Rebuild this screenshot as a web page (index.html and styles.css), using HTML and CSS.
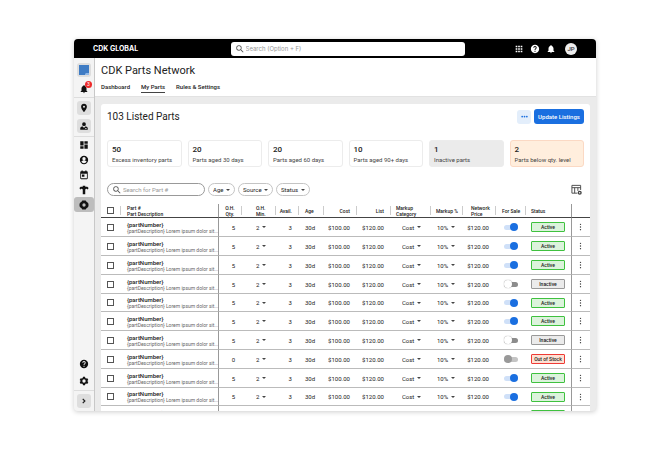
FILE: index.html
```html
<!DOCTYPE html>
<html lang="en">
<head>
    <meta charset="UTF-8">
    <meta name="viewport" content="width=device-width, initial-scale=1.0">
    <title>CDK Parts Network</title>
    <link rel="stylesheet" href="styles.css">
</head>
<body>
    <div class="app">
        <header class="topbar">
            <div class="brand">CDK GLOBAL</div>
            <label class="global-search">
                <svg class="icon" viewBox="0 0 24 24"><path d="M15.5 14h-.79l-.28-.27A6.47 6.47 0 0 0 16 9.5 6.5 6.5 0 1 0 9.5 16c1.61 0 3.09-.59 4.23-1.57l.27.28v.79l5 4.99L20.49 19l-4.99-5zm-6 0C7.01 14 5 11.99 5 9.5S7.01 5 9.5 5 14 7.01 14 9.5 11.99 14 9.5 14z"/></svg>
                <input type="text" placeholder="Search (Option + F)" aria-label="Search">
            </label>
            <div class="topbar-actions">
                <button aria-label="Apps"><svg class="icon" viewBox="0 0 24 24"><path d="M4 4h4v4H4zM10 4h4v4h-4zM16 4h4v4h-4zM4 10h4v4H4zM10 10h4v4h-4zM16 10h4v4h-4zM4 16h4v4H4zM10 16h4v4h-4zM16 16h4v4h-4z"/></svg></button>
                <button aria-label="Help"><svg class="icon" viewBox="0 0 24 24"><path d="M12 2C6.48 2 2 6.48 2 12s4.480 10 10 10 10-4.480 10-10S17.520 2 12 2zm1 17h-2v-2h2v2zm2.070-7.750l-.9.920C13.450 12.900 13 13.500 13 15h-2v-.5c0-1.100.45-2.100 1.170-2.830l1.240-1.260c.37-.36.59-.86.59-1.410 0-1.100-.9-2-2-2s-2 .9-2 2H8c0-2.210 1.790-4 4-4s4 1.790 4 4c0 .88-.36 1.680-.93 2.250z"/></svg></button>
                <button aria-label="Notifications"><svg class="icon" viewBox="0 0 24 24"><path d="M12 22c1.100 0 2-.9 2-2h-4c0 1.100.89 2 2 2zm6-6v-5c0-3.070-1.640-5.640-4.500-6.320V4a1.500 1.500 0 0 0-3 0v.68C7.630 5.360 6 7.920 6 11v5l-2 2v1h16v-1l-2-2z"/></svg></button>
                <button class="avatar">JP</button>
            </div>
        </header>

        <div class="body">
            <nav class="sidebar" aria-label="Main">
                <div class="side-group side-home">
                    <a href="#" class="tile" aria-label="Home"><svg class="logo" viewBox="0 0 10 10"><path fill="#3f7cc4" d="M0 0h10v10H0z"/><path fill="#8fb8e8" d="M6 9l1-1h3v2H6z"/></svg></a>
                    <a href="#" class="alerts" aria-label="Alerts"><svg class="icon" viewBox="0 0 24 24"><path d="M12 22c1.100 0 2-.9 2-2h-4c0 1.100.89 2 2 2zm6-6v-5c0-3.070-1.640-5.640-4.500-6.320V4a1.500 1.500 0 0 0-3 0v.68C7.630 5.360 6 7.920 6 11v5l-2 2v1h16v-1l-2-2z"/></svg><span class="count">3</span></a>
                </div>
                <div class="side-group side-place">
                    <a href="#" class="tile" aria-label="Location"><svg class="icon" viewBox="0 0 24 24"><path d="M12 2C8.130 2 5 5.130 5 9c0 5.250 7 13 7 13s7-7.750 7-13c0-3.870-3.130-7-7-7zm0 9.500a2.500 2.500 0 0 1 0-5 2.500 2.500 0 0 1 0 5z"/></svg></a>
                    <a href="#" class="tile" aria-label="Role"><svg class="icon" viewBox="0 0 24 24"><path d="M12 12a4.500 4.500 0 1 0 0-9 4.500 4.500 0 0 0 0 9zM3 21v-4c0-2.500 3-4 6-4l3 4 3-4c3 0 6 1.500 6 4v4zM15 17v2h3v-2z" fill-rule="evenodd"/></svg></a>
                </div>
                <div class="side-group side-links">
                    <a href="#" aria-label="Dashboard"><svg class="icon" viewBox="0 0 24 24"><path d="M3 13h8V3H3v10zm0 8h8v-6H3v6zm10 0h8V11h-8v10zm0-18v6h8V3h-8z"/></svg></a>
                    <a href="#" aria-label="Account"><svg class="icon" viewBox="0 0 24 24"><path fill-rule="evenodd" d="M12 2a10 10 0 1 0 0 20 10 10 0 0 0 0-20zm0 3a4 4 0 1 1 0 8 4 4 0 0 1 0-8zm0 14.500c-2.700 0-5-1.500-6.300-3.500 0-2 4.300-3 6.300-3s6.300 1 6.300 3a7.500 7.500 0 0 1-6.300 3.500z"/></svg></a>
                    <a href="#" aria-label="Calendar"><svg class="icon" viewBox="0 0 24 24"><path fill-rule="evenodd" d="M19 3h-1V1h-3v2H9V1H6v2H5a2 2 0 0 0-2 2v15a2 2 0 0 0 2 2h14a2 2 0 0 0 2-2V5a2 2 0 0 0-2-2zm0 17H5V9h14v11zM7 11h6v5H7z"/></svg></a>
                    <a href="#" aria-label="Service"><svg class="icon" viewBox="0 0 24 24"><path d="M9 2h6v2h5l3 3-2 4-3-2h-1l-2 2v11H9V11L7 9H6l-3 2-2-4 3-3h5z"/></svg></a>
                    <a href="#" class="current" aria-label="Parts"><svg class="icon" viewBox="0 0 24 24"><path fill-rule="evenodd" d="M8 1h8l2 3 4 3 1 5-1 5-4 3-2 3H8l-2-3-4-3-1-5 1-5 4-3zM12 8a4 4 0 1 0 0 8 4 4 0 0 0 0-8z"/></svg></a>
                </div>
                <div class="side-group side-tools">
                    <a href="#" aria-label="Help"><svg class="icon" viewBox="0 0 24 24"><path d="M12 2a10 10 0 1 0 0 20 10 10 0 0 0 0-20zm1 17h-2v-2h2v2zm2.070-7.750l-.9.920C13.450 12.900 13 13.500 13 15h-2v-.5c0-1.100.45-2.100 1.170-2.830l1.240-1.260c.37-.36.59-.86.59-1.410 0-1.100-.9-2-2-2s-2 .9-2 2H8c0-2.210 1.790-4 4-4s4 1.790 4 4c0 .88-.36 1.680-.93 2.250z"/></svg></a>
                    <a href="#" aria-label="Settings"><svg class="icon" viewBox="0 0 24 24"><path fill-rule="evenodd" d="M9.500 2h5l.6 3 1.900 1.100 2.900-1 2.500 4.300-2.300 2v1.200l2.300 2-2.500 4.300-2.900-1-1.900 1.100-.6 3h-5l-.6-3L7 17.900l-2.900 1-2.500-4.300 2.300-2v-1.200l-2.300-2 2.500-4.300 2.900 1L8.900 5zM12 8a4 4 0 1 0 0 8 4 4 0 0 0 0-8z"/></svg></a>
                </div>
                <div class="side-group side-expand">
                    <button class="tile" aria-label="Expand menu"><svg class="icon" viewBox="0 0 24 24"><path d="M9 7l5 5-5 5" fill="none" stroke="#222" stroke-width="3"/></svg></button>
                </div>
            </nav>

            <main class="main">
                <div class="page-head">
                    <h1>CDK Parts Network</h1>
                    <div class="tabs">
                        <a href="#">Dashboard</a>
                        <a href="#" class="active">My Parts</a>
                        <a href="#">Rules &amp; Settings</a>
                    </div>
                </div>

                <section class="card">
                    <div class="card-head">
                        <h2>103 Listed Parts</h2>
                        <button class="more" aria-label="More"><svg viewBox="0 0 24 24"><circle cx="4" cy="12" r="3"/><circle cx="12" cy="12" r="3"/><circle cx="20" cy="12" r="3"/></svg></button>
                        <button class="update">Update Listings</button>
                    </div>

                    <div class="stats">
                        <div class="stat"><strong>50</strong><span>Excess inventory parts</span></div>
                        <div class="stat"><strong>20</strong><span>Parts aged 30 days</span></div>
                        <div class="stat"><strong>20</strong><span>Parts aged 60 days</span></div>
                        <div class="stat"><strong>10</strong><span>Parts aged 90+ days</span></div>
                        <div class="stat muted"><strong>1</strong><span>Inactive parts</span></div>
                        <div class="stat warning"><strong>2</strong><span>Parts below qty. level</span></div>
                    </div>

                    <div class="filters">
                        <label class="part-search">
                            <svg class="icon" viewBox="0 0 24 24"><path d="M15.500 14h-.79l-.28-.27A6.470 6.470 0 0 0 16 9.500 6.500 6.500 0 1 0 9.500 16c1.610 0 3.090-.59 4.230-1.570l.27.28v.79l5 4.990L20.490 19l-4.990-5zm-6 0C7.010 14 5 11.990 5 9.500S7.010 5 9.500 5 14 7.010 14 9.500 11.990 14 9.500 14z"/></svg>
                            <input type="text" placeholder="Search for Part #" aria-label="Search for part number">
                        </label>
                        <select aria-label="Age"><option>Age</option></select>
                        <select aria-label="Source"><option>Source</option></select>
                        <select aria-label="Status"><option>Status</option></select>
                        <button class="columns" aria-label="Edit columns"><svg viewBox="0 0 24 24"><path d="M14 20H2V3h19v10M2 8h19M8 8v12M15 8v7" fill="none" stroke="#444" stroke-width="2"/><circle cx="19" cy="19" r="3" fill="none" stroke="#444" stroke-width="3"/></svg></button>
                    </div>

                    <table class="parts">
                        <colgroup>
                            <col class="c-check"><col class="c-part"><col class="c-qty"><col class="c-min"><col class="c-avail"><col class="c-age"><col class="c-cost"><col class="c-list"><col class="c-cat"><col class="c-markup"><col class="c-price"><col class="c-sale"><col class="c-status"><col class="c-menu">
                        </colgroup>
                        <thead>
                            <tr>
                                <th class="check"><input type="checkbox" aria-label="Select all"></th>
                                <th class="part sep">Part #<br>Part Description</th>
                                <th class="qty">O.H.<br>Qty.</th>
                                <th class="min sep">O.H.<br>Min.</th>
                                <th class="num sep">Avail.</th>
                                <th class="age sep">Age</th>
                                <th class="num sep">Cost</th>
                                <th class="num sep">List</th>
                                <th class="cat sep">Markup<br>Category</th>
                                <th class="markup sep">Markup %</th>
                                <th class="price sep">Network<br>Price</th>
                                <th class="sale sep">For Sale</th>
                                <th class="status sep">Status</th>
                                <th class="menu"></th>
                            </tr>
                        </thead>
                        <tbody id="parts-body"></tbody>
                    </table>
                </section>
            </main>
        </div>
    </div>

    <script>
        const parts = [
            { qty: 5, status: 'Active' },
            { qty: 5, status: 'Active' },
            { qty: 5, status: 'Active' },
            { qty: 5, status: 'Inactive' },
            { qty: 5, status: 'Active' },
            { qty: 5, status: 'Active' },
            { qty: 5, status: 'Inactive' },
            { qty: 0, status: 'Out of Stock' },
            { qty: 5, status: 'Active' },
            { qty: 5, status: 'Active' },
            { qty: 5, status: 'Active' }
        ];

        function displayParts(list) {
            document.getElementById('parts-body').innerHTML = list.map(part => `
                <tr>
                    <td class="check"><input type="checkbox" aria-label="Select part"></td>
                    <td class="part"><b>{partNumber}</b><span>{partDescription} Lorem ipsum dolor sit...</span></td>
                    <td class="qty">${part.qty}</td>
                    <td class="min"><select aria-label="On hand minimum"><option>2</option></select></td>
                    <td class="num">3</td>
                    <td class="age">30d</td>
                    <td class="num">$100.00</td>
                    <td class="num">$120.00</td>
                    <td class="cat"><select aria-label="Markup category"><option>Cost</option></select></td>
                    <td class="markup"><select aria-label="Markup percent"><option>10%</option></select></td>
                    <td class="price">$120.00</td>
                    <td class="sale"><input type="checkbox" class="switch" aria-label="For sale" ${part.status === 'Active' ? 'checked' : ''} ${part.qty === 0 ? 'disabled' : ''}></td>
                    <td class="status"><span class="badge ${part.status.toLowerCase().replace(/ /g, '-')}">${part.status}</span></td>
                    <td class="menu"><button aria-label="Row menu"><svg viewBox="0 0 8 24"><circle cx="4" cy="4" r="2"/><circle cx="4" cy="12" r="2"/><circle cx="4" cy="20" r="2"/></svg></button></td>
                </tr>`).join('');
        }

        displayParts(parts);
    </script>
</body>
</html>
```
FILE: styles.css
```css
* {
    box-sizing: border-box;
}
body {
    font-family: Roboto, "Liberation Sans", sans-serif;
    font-size: 6px;
    line-height: 8px;
    color: #222;
    background: #fff;
    margin: 0;
    padding: 39px 74px;
    height: 100vh;
}
button, input, select {
    font: inherit;
    color: inherit;
    margin: 0;
    padding: 0;
    border: none;
    background: none;
}
a {
    color: inherit;
    text-decoration: none;
}
.icon {
    display: block;
    width: 10px;
    height: 10px;
    fill: #111;
}
.app {
    height: 100%;
    display: flex;
    flex-direction: column;
    overflow: hidden;
    border-radius: 4px;
    background: #ebebeb;
    box-shadow: 0 1px 5px rgba(0, 0, 0, 0.2);
}

/* Top bar */
.topbar {
    display: grid;
    grid-template-columns: 3fr 5fr 2fr;
    align-items: center;
    height: 19px;
    flex: none;
    background: #000;
    color: #fff;
}
.brand {
    padding-left: 19px;
    font-family: Inter, sans-serif;
    font-size: 7px;
    font-weight: 700;
}
.global-search {
    display: flex;
    align-items: center;
    gap: 1px;
    height: 14px;
    width: 90%;
    padding-left: 4px;
    border-radius: 3px;
    background: #fff;
}
.global-search .icon, .part-search .icon {
    fill: #555;
}
.global-search input, .part-search input {
    flex: 1;
    min-width: 0;
    outline: none;
    color: #222;
}
.global-search input {
    font-family: Inter, sans-serif;
}
input::placeholder {
    color: #999;
}
.topbar-actions {
    display: flex;
    justify-content: flex-end;
    align-items: center;
    gap: 6px;
    padding-right: 19px;
}
.topbar-actions .icon {
    fill: #fff;
}
.topbar-actions .avatar {
    width: 12px;
    height: 12px;
    margin-left: 3px;
    border-radius: 50%;
    background: #eee;
    color: #333;
    font-weight: 500;
}

/* Sidebar */
.body {
    display: flex;
    flex: 1;
    min-height: 0;
}
.sidebar {
    display: flex;
    flex-direction: column;
    width: 21px;
    flex: none;
    background: #f4f4f4;
    border-right: 1px solid #c8c8c8;
}
.side-group {
    display: flex;
    flex-direction: column;
    align-items: center;
}
.side-group a {
    display: flex;
    align-items: center;
    justify-content: center;
    width: 100%;
    height: 15px;
}
.side-group .tile {
    display: flex;
    align-items: center;
    justify-content: center;
    width: 14px;
    height: 14px;
    border-radius: 3px;
    background: #dedede;
}
.side-home {
    gap: 4px;
    padding: 5px 0 1px;
    border-bottom: 1px solid #ddd;
}
.side-home .logo {
    width: 10px;
    height: 10px;
}
.side-home .alerts {
    position: relative;
}
.count {
    position: absolute;
    top: 0;
    right: 2px;
    width: 7px;
    height: 7px;
    border-radius: 50%;
    background: #ee2b2b;
    color: #fff;
    font-size: 5px;
    line-height: 7px;
    text-align: center;
}
.side-place {
    gap: 4px;
    padding: 3px 0;
    border-bottom: 1px solid #ddd;
}
.side-links .current {
    border-radius: 3px;
    background: #bdbdbd;
}
.side-tools {
    margin-top: auto;
    gap: 2px;
    padding-bottom: 2px;
}
.side-expand {
    padding: 3px 0;
    border-top: 1px solid #ddd;
}

/* Page */
.main {
    display: flex;
    flex-direction: column;
    flex: 1;
    min-width: 0;
}
.page-head {
    flex: none;
    height: 39px;
    padding: 5px 6px 0;
    background: #fff;
    border-bottom: 1px solid #e2e2e2;
}
h1, h2 {
    margin: 0;
    font-weight: 400;
}
h1 {
    font-size: 11px;
    line-height: 16px;
}
.tabs {
    display: flex;
    gap: 11px;
    margin-top: 3px;
    font-weight: 500;
}
.tabs a {
    height: 11px;
    line-height: 10px;
}
.tabs .active {
    border-bottom: 1px solid #444;
}
.card {
    flex: 1;
    min-height: 0;
    overflow: hidden;
    margin: 7px 6px 0;
    border-radius: 3px 3px 0 0;
    background: #fff;
}
.card-head {
    display: flex;
    align-items: center;
    gap: 3px;
    padding: 5px 6px 0;
}
h2 {
    flex: 1;
    font-size: 10px;
    line-height: 15px;
}
.more {
    display: flex;
    align-items: center;
    justify-content: center;
    width: 14px;
    height: 14px;
    border-radius: 3px;
    background: #e3eefb;
}
.more svg {
    width: 7px;
    height: 7px;
    fill: #1a6fe0;
}
.update {
    min-width: 50px;
    height: 15px;
    padding: 0 4px;
    border-radius: 3px;
    background: #1a6fe0;
    color: #fff;
    font-weight: 500;
}
.stats {
    display: grid;
    grid-template-columns: repeat(6, 1fr);
    gap: 6px;
    padding: 16px 6px;
}
.stat {
    height: 27px;
    padding: 4px;
    border: 1px solid #ececec;
    border-radius: 3px;
    white-space: nowrap;
}
.stat strong {
    display: block;
    font-size: 8px;
    line-height: 10px;
    font-weight: 500;
}
.stat span {
    display: block;
    line-height: 9px;
    color: #444;
}
.stat.muted {
    background: #ebebeb;
}
.stat.warning {
    background: #ffeedd;
    border-color: #fbd9c4;
}

/* Filters */
.filters {
    display: flex;
    align-items: center;
    gap: 3px;
    padding: 0 6px 8px;
}
.part-search {
    display: flex;
    align-items: center;
    gap: 1px;
    width: 98px;
    height: 13px;
    padding: 0 4px;
    border: 1px solid #999;
    border-radius: 7px;
}
select {
    appearance: none;
    padding-right: 6px;
    background: url("data:image/svg+xml,%3Csvg xmlns='http://www.w3.org/2000/svg' viewBox='0 0 4 2'%3E%3Cpath fill='%23444' d='M0 0h4L2 2z'/%3E%3C/svg%3E") no-repeat right center / 4px 2px;
}
.filters select {
    height: 13px;
    padding: 0 10px 0 4px;
    border: 1px solid #c4c4c4;
    border-radius: 7px;
    background-position: right 4px center;
}
.columns {
    display: flex;
    margin-left: auto;
    margin-right: 2px;
}
.columns svg {
    width: 11px;
    height: 11px;
}

/* Parts table */
.parts {
    width: 100%;
    table-layout: fixed;
    border-collapse: separate;
    border-spacing: 0;
}
.c-check, .c-menu { width: 19px; }
.c-part { width: 20%; }
.c-qty, .c-avail { width: 23px; }
.c-age { width: 25px; }
.c-min, .c-list { width: 34px; }
.c-cost, .c-price { width: 33px; }
.c-cat { width: 40px; }
.c-markup { width: 32px; }
.c-sale { width: 30px; }
.c-status { width: 46px; }
th, td {
    padding: 0;
    text-align: left;
    white-space: nowrap;
}
th {
    height: 14px;
    font-size: 5px;
    line-height: 6px;
    font-weight: 500;
    border-bottom: 1px solid #444;
}
th.sep {
    background: linear-gradient(#ccc, #ccc) no-repeat left center / 1px 9px;
}
td {
    height: 19px;
    line-height: 7px;
    border-bottom: 1px solid #bbb;
}
/* keeps ten rows on the 188px grid */
tr:nth-child(5n) td {
    height: 18px;
}
td > * {
    vertical-align: middle;
}
.check {
    padding-left: 6px;
}
.check input {
    display: block;
    appearance: none;
    width: 7px;
    height: 7px;
    border: 1px solid #555;
}
.part {
    padding-left: 7px;
}
.part b {
    display: block;
    font-weight: 500;
}
.part span {
    display: block;
    font-size: 5px;
    line-height: 6px;
    color: #666;
}
.qty, .menu {
    border-left: 1px solid #999;
    text-align: center;
}
td.qty {
    padding-left: 7px;
}
.min {
    padding-left: 15px;
}
.num, .price {
    padding-right: 6px;
    text-align: right;
}
.age {
    padding-left: 7px;
}
th.cat, th.markup {
    padding-left: 6px;
}
td.cat {
    padding-left: 12px;
}
td.markup {
    padding-left: 7px;
}
th.price {
    padding-left: 9px;
    text-align: left;
}
.sale {
    padding-left: 7px;
}
.status {
    padding-left: 6px;
}
.badge {
    display: block;
    width: 34px;
    height: 10px;
    border: 1px solid #3fc13f;
    border-radius: 1px;
    background: #dcf3dc;
    font-size: 5px;
    line-height: 8px;
    font-weight: 500;
    text-align: center;
}
.badge.inactive {
    border-color: #999;
    background: #ebebeb;
}
.badge.out-of-stock {
    border-color: #ee3a35;
    background: #fde0d3;
}
.switch {
    appearance: none;
    display: flex;
    align-items: center;
    width: 14px;
    height: 5px;
    margin-left: 2px;
    border-radius: 3px;
    background: #8c8c8c;
}
.switch::before {
    content: "";
    width: 8px;
    height: 8px;
    flex: none;
    border-radius: 50%;
    background: #fff;
    box-shadow: 0 0 1px #777;
}
.switch:checked {
    justify-content: flex-end;
    background: #cfe0f8;
}
.switch:checked::before {
    background: #1a6fe0;
    box-shadow: none;
}
.switch:disabled {
    background: #c4c4c4;
}
.switch:disabled::before {
    background: #999;
    box-shadow: none;
}
.menu button {
    display: block;
    margin-left: 7px;
}
.menu svg {
    display: block;
    width: 3px;
    height: 8px;
    fill: #333;
}
```
